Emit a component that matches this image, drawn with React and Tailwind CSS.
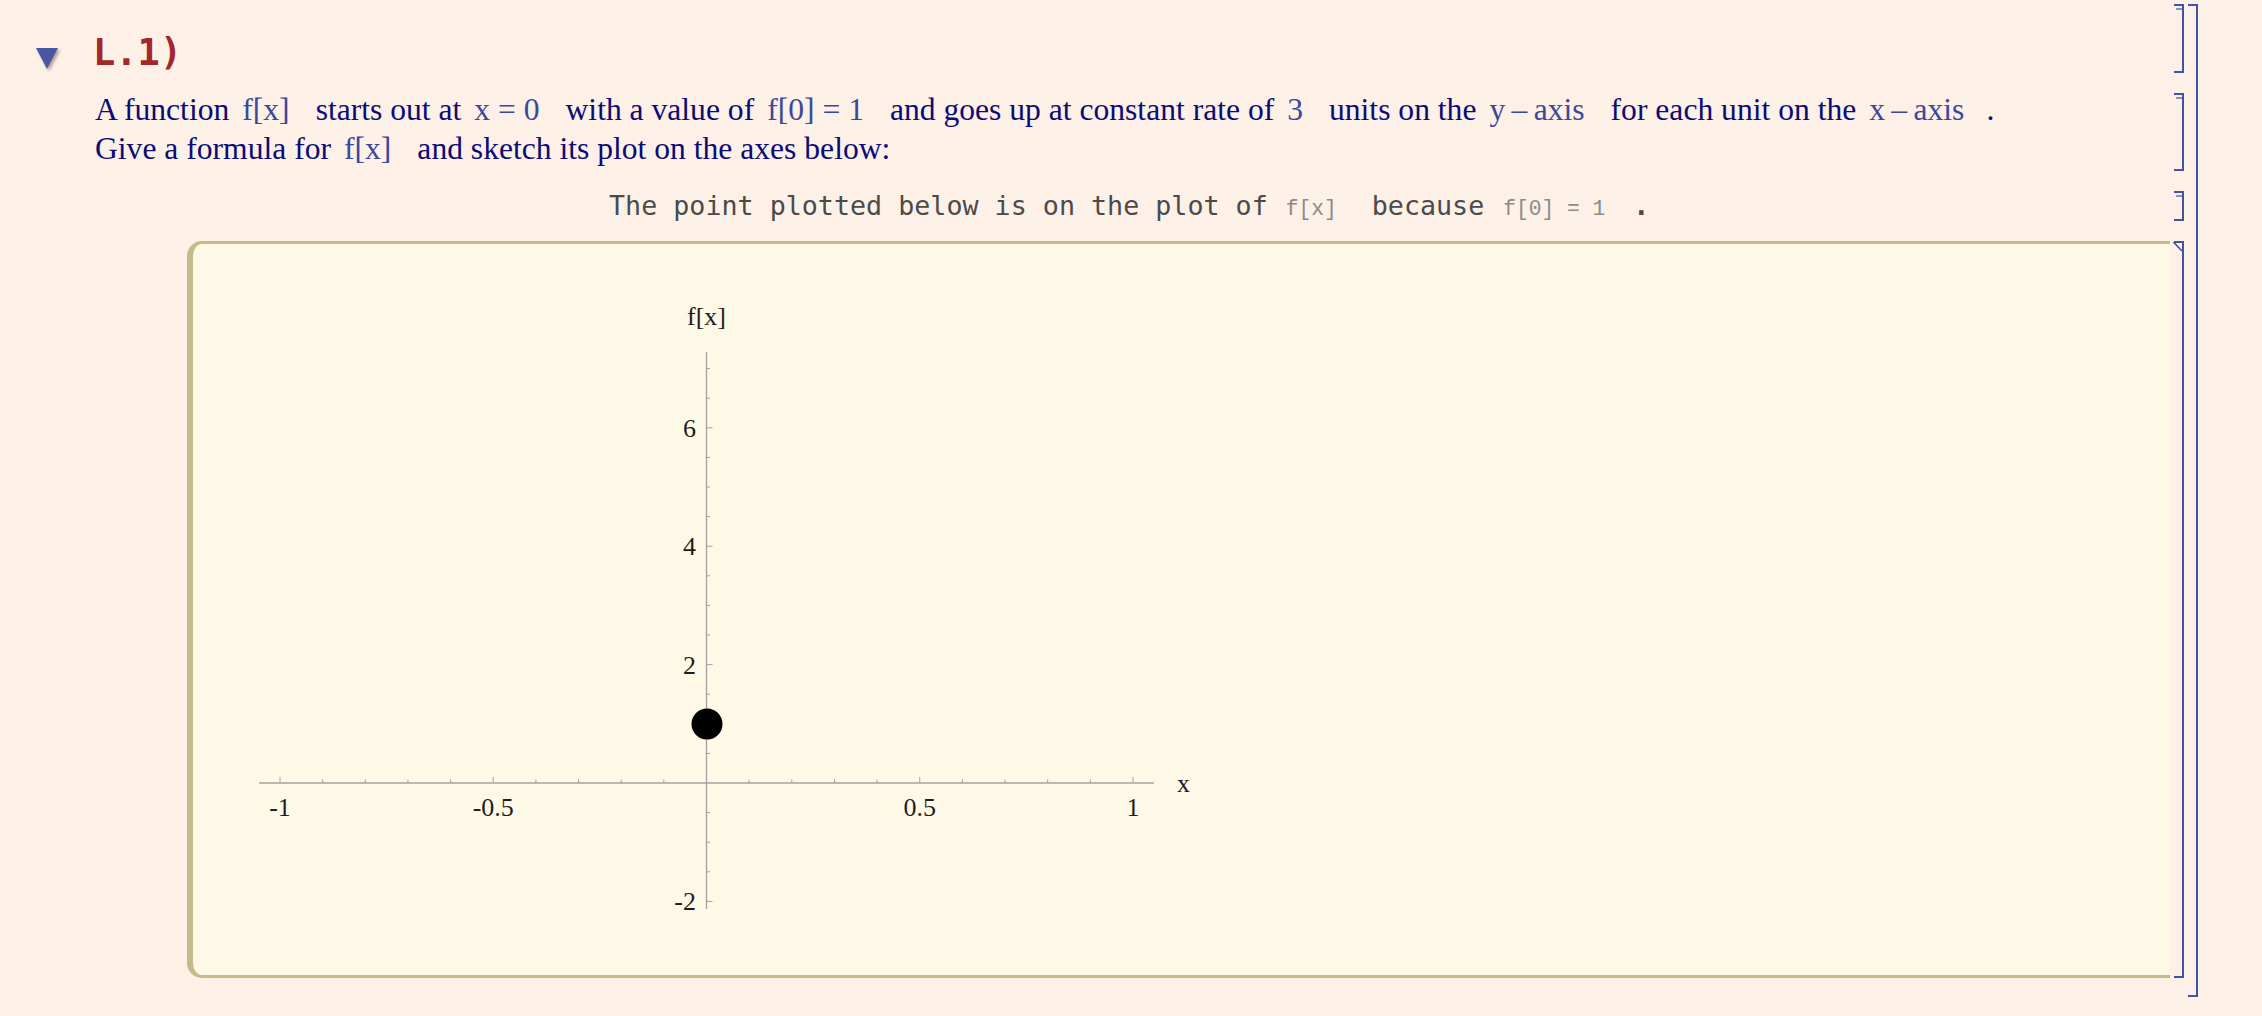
import React from "react";

const BRACKET = "border-[#4353a2]";

function Bracket({ output = false }) {
  return (
    <div className={`relative w-[10px] h-full shrink-0 border-t-2 border-r-2 border-b-2 ${BRACKET}`}>
      {output ? (
        <svg className="absolute -top-[2px] -left-[1px]" width="10" height="11">
          <line x1="0.5" y1="1" x2="9" y2="10" stroke="#4353a2" strokeWidth="1.6" />
        </svg>
      ) : (
        <div className="absolute top-[2px] left-[2px] w-[6px] h-[2px] bg-[#8790c6]" />
      )}
    </div>
  );
}

function M({ children }) {
  return <span className="text-[#3a489b] ml-[13px] mr-[26px]">{children}</span>;
}

function Small({ children, className = "" }) {
  return (
    <span className={`font-['Liberation_Mono',monospace] text-[21.25px] text-[#8b8b8b] ${className}`}>
      {children}
    </span>
  );
}

function Plot() {
  const ox = 706.5;
  const oy = 783;
  const ux = 426.5;
  const uy = 59.2;
  const X = (v) => ox + v * ux;
  const Y = (v) => oy - v * uy;
  const xt = [];
  for (let i = -10; i <= 10; i++) if (i !== 0) xt.push(i);
  const yt = [];
  for (let j = -4; j <= 14; j++) if (j !== 0) yt.push(j);
  const axis = "#a2a2a2";

  return (
    <svg width="1977" height="731" className="block">
      <g
        transform="translate(-193 -244)"
        fontFamily="'Liberation Serif', 'Times New Roman', serif"
        fontSize="26"
        fill="#1d1d1d"
      >
        <line x1="259" y1={oy} x2="1154" y2={oy} stroke={axis} strokeWidth="1.3" />
        <line x1={ox} y1="352" x2={ox} y2="909" stroke={axis} strokeWidth="1.3" />

        {xt.map((i) => {
          const major = i % 5 === 0;
          const x = X(i / 10);
          return (
            <line key={"x" + i} x1={x} y1={oy} x2={x} y2={oy - (major ? 6 : 3.5)} stroke={axis} strokeWidth="1" />
          );
        })}
        {yt.map((j) => {
          const major = j % 4 === 0;
          const y = Y(j / 2);
          return (
            <line key={"y" + j} x1={ox} y1={y} x2={ox + (major ? 6 : 3.5)} y2={y} stroke={axis} strokeWidth="1" />
          );
        })}

        {[
          [-1, "-1"],
          [-0.5, "-0.5"],
          [0.5, "0.5"],
          [1, "1"],
        ].map(([v, t]) => (
          <text key={t} x={X(v)} y="816" textAnchor="middle">
            {t}
          </text>
        ))}
        {[
          [6, "6"],
          [4, "4"],
          [2, "2"],
          [-2, "-2"],
        ].map(([v, t]) => (
          <text key={t} x="696" y={Y(v) + 9} textAnchor="end">
            {t}
          </text>
        ))}

        <text x={ox} y="325" textAnchor="middle">f[x]</text>
        <text x="1177" y="792">x</text>

        <circle cx="707" cy="724" r="15.5" fill="#000" />
      </g>
    </svg>
  );
}

export default function App() {
  return (
    <div className="w-[2262px] h-[1016px] overflow-hidden bg-[#fdf0e7] flex items-start pt-[4px]">
      <div className="flex flex-col gap-[20px]">
        {/* title */}
        <div className="flex h-[69px]">
          <div className="w-[2174px] shrink-0 flex items-start">
            <svg width="28" height="27" className="ml-[36px] mt-[44px]">
              <defs>
                <filter id="sh" x="-30%" y="-30%" width="160%" height="160%">
                  <feDropShadow dx="2" dy="2" stdDeviation="1.8" floodColor="#3a2a10" floodOpacity="0.4" />
                </filter>
              </defs>
              <polygon points="0,0 22,0 11,21" fill="#4a56a0" filter="url(#sh)" />
            </svg>
            <span className="ml-[29px] mt-[30px] leading-none text-[37px] font-bold font-['DejaVu_Sans_Mono',monospace] text-[#a3282b]">
              L.1)
            </span>
          </div>
          <Bracket />
        </div>

        {/* question text */}
        <div className="flex h-[78px]">
          <div className="w-[2174px] shrink-0 pl-[95px]">
            <p className="-mt-[3px] whitespace-nowrap font-['Liberation_Serif','Times_New_Roman',serif] text-[31.6px] leading-[39px] text-[#0b0b78]">
              A function<M>f[x]</M>starts out at<M>x = 0</M>with a value of<M>f[0] = 1</M>and goes up at constant rate of<M>3</M>units on the
              <M>y{"\u2009–\u2009"}axis</M>for each unit on the<M>x{"\u2009–\u2009"}axis</M>
              <span className="-ml-[4px]">.</span>
              <br />
              Give a formula for<M>f[x]</M>and sketch its plot on the axes below:
            </p>
          </div>
          <Bracket />
        </div>

        {/* mono note */}
        <div className="flex h-[30px]">
          <div className="w-[2174px] shrink-0 pl-[609px]">
            <p className="whitespace-nowrap font-['DejaVu_Sans_Mono',monospace] text-[26.7px] leading-[30px] text-[#4a4a4a]">
              The point plotted below is on the plot of
              <Small className="ml-[18px]">f[x]</Small>
              <span className="ml-[35px]">because</span>
              <Small className="ml-[19px]">f[0] = 1</Small>
              <span className="ml-[28px] font-bold">.</span>
            </p>
          </div>
          <Bracket />
        </div>

        {/* plot */}
        <div className="flex h-[737px]">
          <div className="w-[2174px] shrink-0 pl-[187px] pr-[4px] flex">
            <div className="flex-1 overflow-hidden rounded-l-[15px] border-l-[6px] border-t-[3px] border-b-[3px] border-[#c4bb89] bg-[#fef9e7]">
              <Plot />
            </div>
          </div>
          <Bracket output />
        </div>
      </div>

      <div className={`ml-[4px] w-[10px] h-[993px] shrink-0 border-t-2 border-r-2 border-b-2 ${BRACKET}`} />
    </div>
  );
}
